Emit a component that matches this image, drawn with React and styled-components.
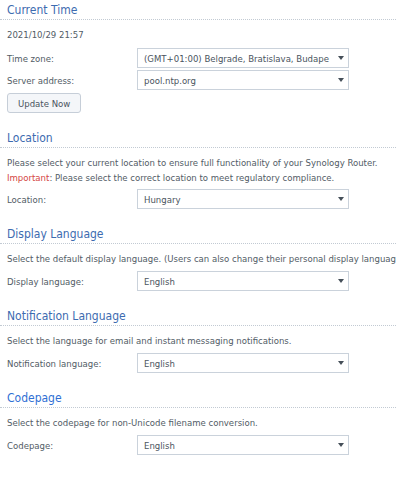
import React from 'react';
import styled, { createGlobalStyle } from 'styled-components';

const GlobalStyle = createGlobalStyle`
html, body {
  margin: 0;
  padding: 0;
  background: #ffffff;
  overflow: hidden;
}
body {
  font-family: "DejaVu Sans Condensed", "DejaVu Sans", sans-serif;
  font-size: 9.5px;
  color: #525c66;
}
`

const Page = styled.div`
width: 396px;
padding-top: 2px;
`

const Section = styled.section`
margin-bottom: 17px;
`

const Header = styled.div`
font-size: 12px;
line-height: 16px;
padding: 0 0 1px 7px;
color: ${props => props.active ? '#2f6fd4' : '#3d6bb0'};
border-bottom: 1px dotted #c2cad3;
white-space: nowrap;
`

const Body = styled.div`
padding: 7px 0 0 7px;
`

const Text = styled.div`
line-height: 15px;
white-space: nowrap;
margin-bottom: ${props => props.gap ?? 5}px;
`

const Important = styled.span`
color: #d4463f;
`

const Row = styled.div`
display: flex;
align-items: center;
margin-bottom: 2px;
`

const Label = styled.div`
width: 130px;
flex-shrink: 0;
`

const Select = styled.div`
width: 212px;
height: 20px;
box-sizing: border-box;
border: 1px solid #cad2db;
background: #fff;
display: flex;
align-items: center;
padding: 0 4px 0 6px;
`

const Value = styled.div`
flex: 1;
overflow: hidden;
white-space: nowrap;
color: #4a545e;
`

const Arrow = styled.div`
width: 0;
height: 0;
margin-left: 6px;
border-left: 3.5px solid transparent;
border-right: 3.5px solid transparent;
border-top: 4px solid #454f59;
`

const Button = styled.button`
margin-top: 1px;
height: 20px;
padding: 0 10px;
font-family: inherit;
font-size: inherit;
color: #4a545e;
background: #f4f6f9;
border: 1px solid #c6ced8;
border-radius: 3px;
`

const Field = ({ label, value }) => (
    <Row>
        <Label>{label}</Label>
        <Select>
            <Value>{value}</Value>
            <Arrow />
        </Select>
    </Row>
)

export default function App() {
    return (
        <Page>
            <GlobalStyle />

            <Section>
                <Header>Current Time</Header>
                <Body>
                    <Text gap={6}>2021/10/29 21:57</Text>
                    <Field label="Time zone:" value="(GMT+01:00) Belgrade, Bratislava, Budape" />
                    <Field label="Server address:" value="pool.ntp.org" />
                    <Button>Update Now</Button>
                </Body>
            </Section>

            <Section>
                <Header>Location</Header>
                <Body>
                    <Text gap={0}>Please select your current location to ensure full functionality of your Synology Router.</Text>
                    <Text gap={4}><Important>Important</Important>: Please select the correct location to meet regulatory compliance.</Text>
                    <Field label="Location:" value="Hungary" />
                </Body>
            </Section>

            <Section>
                <Header>Display Language</Header>
                <Body>
                    <Text>Select the default display language. (Users can also change their personal display language</Text>
                    <Field label="Display language:" value="English" />
                </Body>
            </Section>

            <Section>
                <Header>Notification Language</Header>
                <Body>
                    <Text>Select the language for email and instant messaging notifications.</Text>
                    <Field label="Notification language:" value="English" />
                </Body>
            </Section>

            <Section>
                <Header active>Codepage</Header>
                <Body>
                    <Text>Select the codepage for non-Unicode filename conversion.</Text>
                    <Field label="Codepage:" value="English" />
                </Body>
            </Section>
        </Page>
    )
}
